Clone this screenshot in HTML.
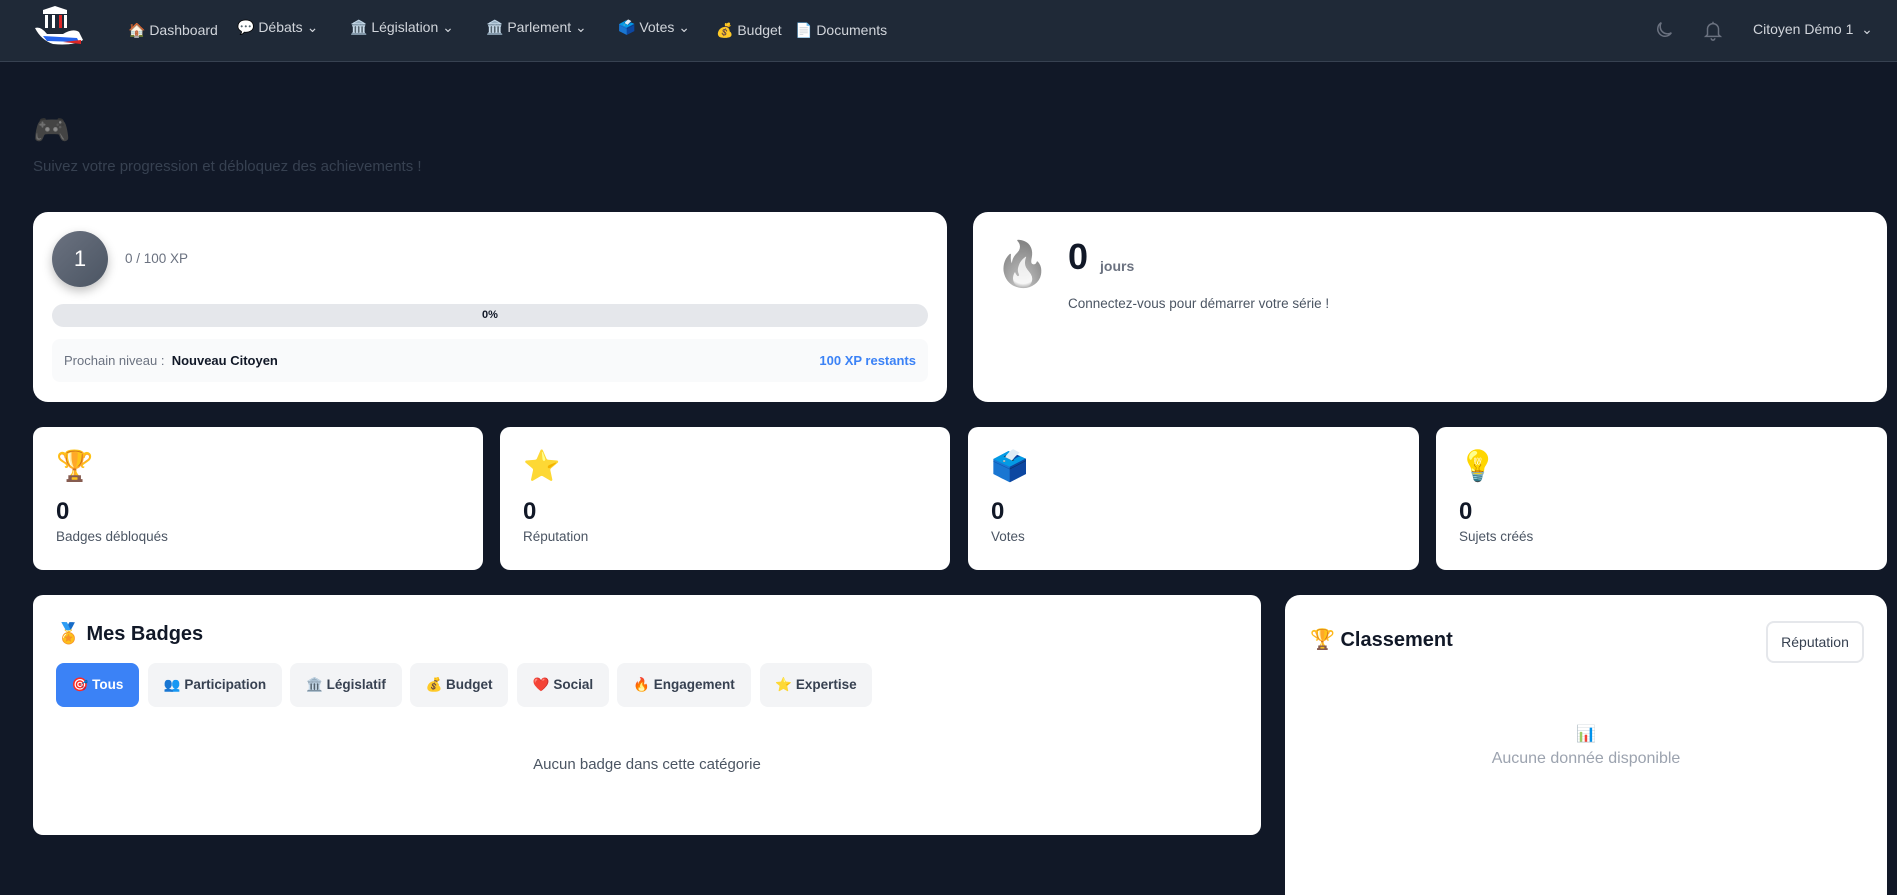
<!DOCTYPE html>
<html style="height:895px;overflow:hidden"><head><meta charset="utf-8">
<style>
*{box-sizing:border-box;margin:0;padding:0}
body{width:1897px;height:895px;overflow:hidden;background:#111827;font-family:"Liberation Sans","Noto Sans CJK SC",sans-serif;position:relative}
.a{position:absolute;white-space:nowrap}
.nav{position:absolute;left:0;top:0;width:1897px;height:62px;background:#1f2937;border-bottom:1px solid #374151}
.ni{position:absolute;top:21px;color:#d1d5db;font-size:14px}
.card{position:absolute;background:#fff;border-radius:15px}
.sc{position:absolute;background:#fff;border-radius:10px;top:427px;height:143px}
.sc .e{position:absolute;left:23px;top:22px;font-size:30px}
.sc .n{position:absolute;left:23px;top:71px;font-size:24px;font-weight:bold;color:#111827}
.sc .l{position:absolute;left:23px;top:102px;font-size:13.5px;color:#4b5563}
.tab{position:absolute;top:663px;height:44px;border-radius:8px;background:#f3f4f6;color:#374151;font-size:13.5px;font-weight:bold;display:flex;align-items:center;justify-content:center}
</style></head><body>
<div class="nav">
 <svg class="a" style="left:33px;top:6px" width="52" height="42" viewBox="0 0 52 42">
  <path d="M10 4 L22 0 L34 4 L34 8 L10 8Z" fill="#fff"/>
  <rect x="12" y="9" width="3" height="13" fill="#fff"/><rect x="19" y="9" width="3" height="13" fill="#fff"/><rect x="26" y="9" width="3" height="13" fill="#dc2626"/><rect x="31" y="9" width="3" height="13" fill="#fff"/>
  <path d="M2 22 Q8 20 14 28 L30 28 Q40 22 46 26 L50 34 Q40 40 20 38 Q8 34 2 22Z" fill="#fff"/>
  <path d="M10 30 L44 32 L46 36 L14 35Z" fill="#2563eb"/><path d="M30 36 L48 34 L48 38Z" fill="#dc2626"/>
 </svg>
 <div class="ni" style="left:128px;top:22px">🏠 Dashboard</div>
 <div class="ni" style="left:237px;top:19px">💬 Débats ⌄</div>
 <div class="ni" style="left:350px;top:19px">🏛️ Législation ⌄</div>
 <div class="ni" style="left:486px;top:19px">🏛️ Parlement ⌄</div>
 <div class="ni" style="left:618px;top:19px">🗳️ Votes ⌄</div>
 <div class="ni" style="left:716px;top:22px">💰 Budget</div>
 <div class="ni" style="left:795px;top:22px">📄 Documents</div>
 <svg class="a" style="left:1653px;top:19px" width="22" height="22" viewBox="0 0 24 24" fill="none" stroke="#6b7280" stroke-width="1.6"><path d="M20 15A8 8 0 0 1 9 4a8 8 0 1 0 11 11z"/></svg>
 <svg class="a" style="left:1702px;top:18px" width="22" height="24" viewBox="0 0 24 24" fill="none" stroke="#6b7280" stroke-width="1.6"><path d="M6 17V11a6 6 0 0 1 12 0v6l2 2H4z M10 21a2 2 0 0 0 4 0 M12 3v2"/></svg>
 <div class="ni" style="left:1753px;top:21px;font-size:14px">Citoyen Démo 1 &nbsp;⌄</div>
</div>

<div class="a" style="left:33px;top:113px;font-size:30px;filter:saturate(0) brightness(.7)">🎮</div>
<div class="a" style="left:33px;top:158px;font-size:15px;color:#374151">Suivez votre progression et débloquez des achievements !</div>

<div class="card" style="left:33px;top:212px;width:914px;height:190px">
 <div class="a" style="left:19px;top:19px;width:56px;height:56px;border-radius:50%;background:linear-gradient(135deg,#6b7280,#4b5563);box-shadow:0 4px 10px rgba(0,0,0,.25);color:#fff;font-size:22px;display:flex;align-items:center;justify-content:center">1</div>
 <div class="a" style="left:92px;top:39px;font-size:13.5px;color:#6b7280">0 / 100 XP</div>
 <div class="a" style="left:19px;top:92px;width:876px;height:23px;border-radius:12px;background:#e5e7eb;font-size:11px;font-weight:bold;color:#111827;text-align:center;line-height:23px">0%</div>
 <div class="a" style="left:19px;top:127px;width:876px;height:43px;border-radius:8px;background:#f9fafb">
  <div class="a" style="left:12px;top:14px;font-size:13px;color:#6b7280">Prochain niveau : &nbsp;<b style="color:#111827">Nouveau Citoyen</b></div>
  <div class="a" style="right:12px;top:14px;font-size:13px;font-weight:bold;color:#3b82f6">100 XP restants</div>
 </div>
</div>

<div class="card" style="left:973px;top:212px;width:914px;height:190px">
 <div class="a" style="left:22px;top:26px;font-size:44px;filter:saturate(0) grayscale(1);opacity:.8">🔥</div>
 <div class="a" style="left:95px;top:24px;font-size:36px;font-weight:bold;color:#111827">0</div>
 <div class="a" style="left:127px;top:46px;font-size:14px;font-weight:bold;color:#6b7280">jours</div>
 <div class="a" style="left:95px;top:84px;font-size:13.5px;color:#4b5563">Connectez-vous pour démarrer votre série !</div>
</div>

<div class="sc" style="left:33px;width:450px"><div class="e">🏆</div><div class="n">0</div><div class="l">Badges débloqués</div></div>
<div class="sc" style="left:500px;width:450px"><div class="e">⭐</div><div class="n">0</div><div class="l">Réputation</div></div>
<div class="sc" style="left:968px;width:451px"><div class="e">🗳️</div><div class="n">0</div><div class="l">Votes</div></div>
<div class="sc" style="left:1436px;width:451px"><div class="e">💡</div><div class="n">0</div><div class="l">Sujets créés</div></div>

<div class="card" style="left:33px;top:595px;width:1228px;height:240px;border-radius:10px">
 <div class="a" style="left:23px;top:26px;font-size:20px;font-weight:bold;color:#111827">🏅 Mes Badges</div>
 <div class="a" style="left:0;width:1228px;top:161px;text-align:center;font-size:15px;color:#4b5563">Aucun badge dans cette catégorie</div>
</div>
<div class="tab" style="left:56px;width:83px;background:#3b82f6;color:#fff">🎯 Tous</div>
<div class="tab" style="left:148px;width:134px">👥 Participation</div>
<div class="tab" style="left:290px;width:112px">🏛️ Législatif</div>
<div class="tab" style="left:410px;width:98px">💰 Budget</div>
<div class="tab" style="left:517px;width:92px">❤️ Social</div>
<div class="tab" style="left:617px;width:134px">🔥 Engagement</div>
<div class="tab" style="left:760px;width:112px">⭐ Expertise</div>

<div class="card" style="left:1285px;top:595px;width:602px;height:300px;border-radius:15px 15px 0 0">
 <div class="a" style="left:25px;top:32px;font-size:20px;font-weight:bold;color:#111827">🏆 Classement</div>
 <div class="a" style="left:481px;top:26px;width:98px;height:42px;border:2px solid #e5e7eb;border-radius:8px;font-size:14px;color:#374151;text-align:center;line-height:38px">Réputation</div>
 <div class="a" style="left:0;width:602px;top:129px;text-align:center;font-size:16px">📊</div>
 <div class="a" style="left:0;width:602px;top:155px;text-align:center;font-size:16px;color:#9ca3af">Aucune donnée disponible</div>
</div>
</body></html>
